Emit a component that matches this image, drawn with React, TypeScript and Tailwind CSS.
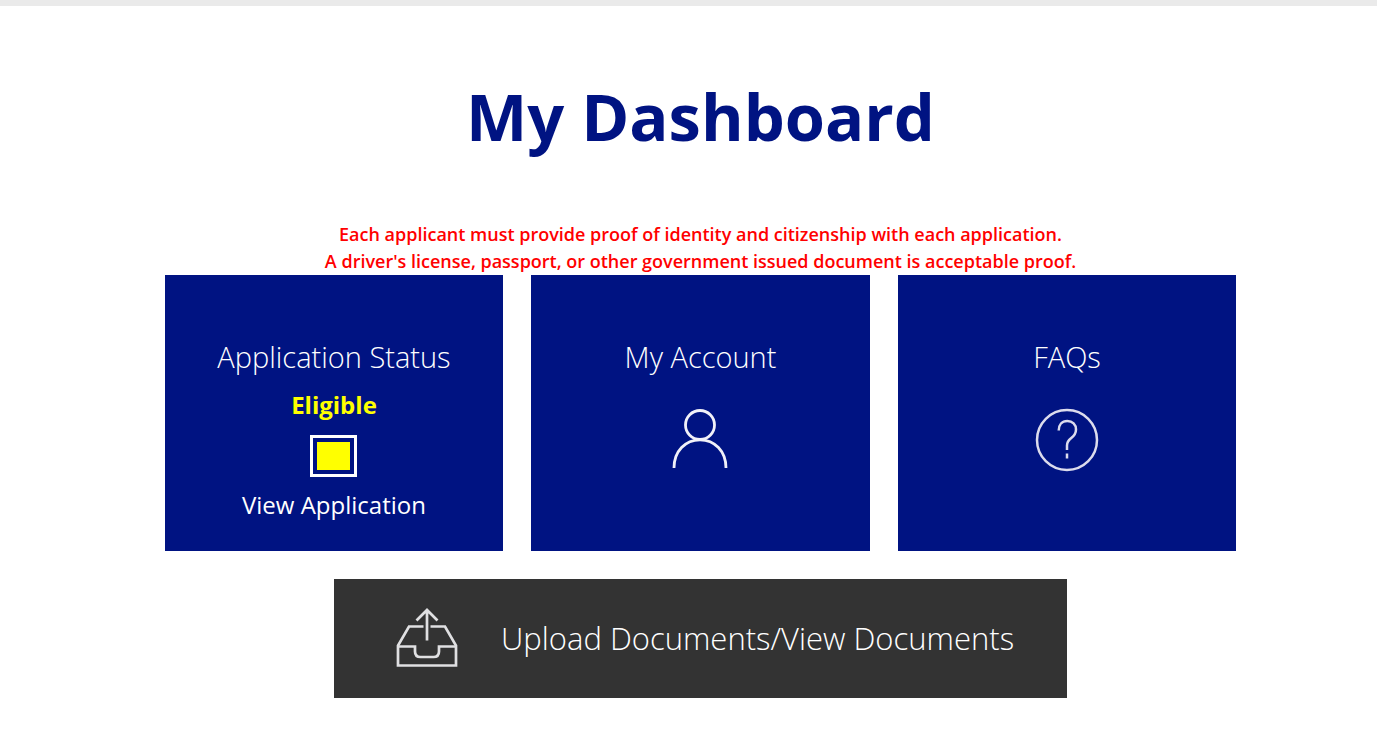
import React from "react";

function PersonIcon() {
  return (
    <svg className="h-16 w-16" viewBox="0 0 64 64" fill="none" stroke="#f1f1f8" strokeWidth="2.8" aria-hidden="true">
      <circle cx="32" cy="17" r="14.5" />
      <path d="M6 60C6 43 17.500 31.800 32 31.800S58 43 58 60" />
    </svg>
  );
}

function QuestionIcon() {
  return (
    <svg className="h-16 w-16" viewBox="0 0 64 64" fill="none" stroke="#dcdced" strokeWidth="2.500" aria-hidden="true">
      <circle cx="32" cy="32" r="30" />
      <path d="M23.700 22.500C23.700 16.500 27 13 32.300 13C37.500 13 41 16.500 41 21.500C41 25.500 39 28 36 30.300C33.500 32.300 32 34.300 32 37.500V42M32 45.500V50.500" />
    </svg>
  );
}

function UploadIcon() {
  return (
    <svg className="h-16 w-16 shrink-0" viewBox="0 1.500 64 64" fill="none" stroke="#e0e0e2" strokeWidth="2.700" aria-hidden="true">
      <path d="M32 35V4M21.500 15L32 4.500L42.500 15" />
      <path d="M28.500 21H14L3 40V60H61V40L50 21H35.500" />
      <path d="M3 41H20V46Q20 51.500 25.500 51.500H38.500Q44 51.500 44 46V41H61" />
    </svg>
  );
}

const card =
  "flex h-[276px] flex-col items-center bg-[#001382] pt-[62px] text-center text-white";
const title = "text-[29px] leading-10 font-light";

export default function App() {
  return (
    <div className="min-h-screen border-t-[6px] border-[#eaeaea] bg-white pl-6 font-['Open_Sans','Noto_Sans',sans-serif]">
      <main className="mx-auto flex w-[79.200%] flex-col items-center pb-8">
        <h1 className="pt-16 text-[65px] leading-[92px] font-bold text-[#001382]">My Dashboard</h1>
        <p className="mt-[59px] text-center text-[18px] leading-[27px] font-semibold text-[#ff0000]">
          Each applicant must provide proof of identity and citizenship with each application.
          <br />
          A driver's license, passport, or other government issued document is acceptable proof.
        </p>
        <div className="grid w-full grid-cols-3 gap-7">
          <section className={card}>
            <h2 className={title}>Application Status</h2>
            <p className="mt-2 text-2xl leading-10 font-bold text-[#ffff00]">Eligible</p>
            <div className="mt-2.5 h-[42px] w-[47px] border-[3px] border-white p-1">
              <div className="h-full w-full bg-[#ffff00]" />
            </div>
            <a href="#application" className="mt-2 text-2xl leading-10">View Application</a>
          </section>
          <a href="#account" className={card}>
            <h2 className={title}>My Account</h2>
            <div className="mt-[31px]"><PersonIcon /></div>
          </a>
          <a href="#faqs" className={card}>
            <h2 className={title}>FAQs</h2>
            <div className="mt-[31px]"><QuestionIcon /></div>
          </a>
        </div>
        <a
          href="#documents"
          className="mt-7 flex h-[119px] w-[68.400%] items-center gap-[42px] bg-[#333333] pl-[61px] text-[31px] font-light text-white"
        >
          <UploadIcon />
          <span className="whitespace-nowrap">Upload Documents/View Documents</span>
        </a>
      </main>
    </div>
  );
}
